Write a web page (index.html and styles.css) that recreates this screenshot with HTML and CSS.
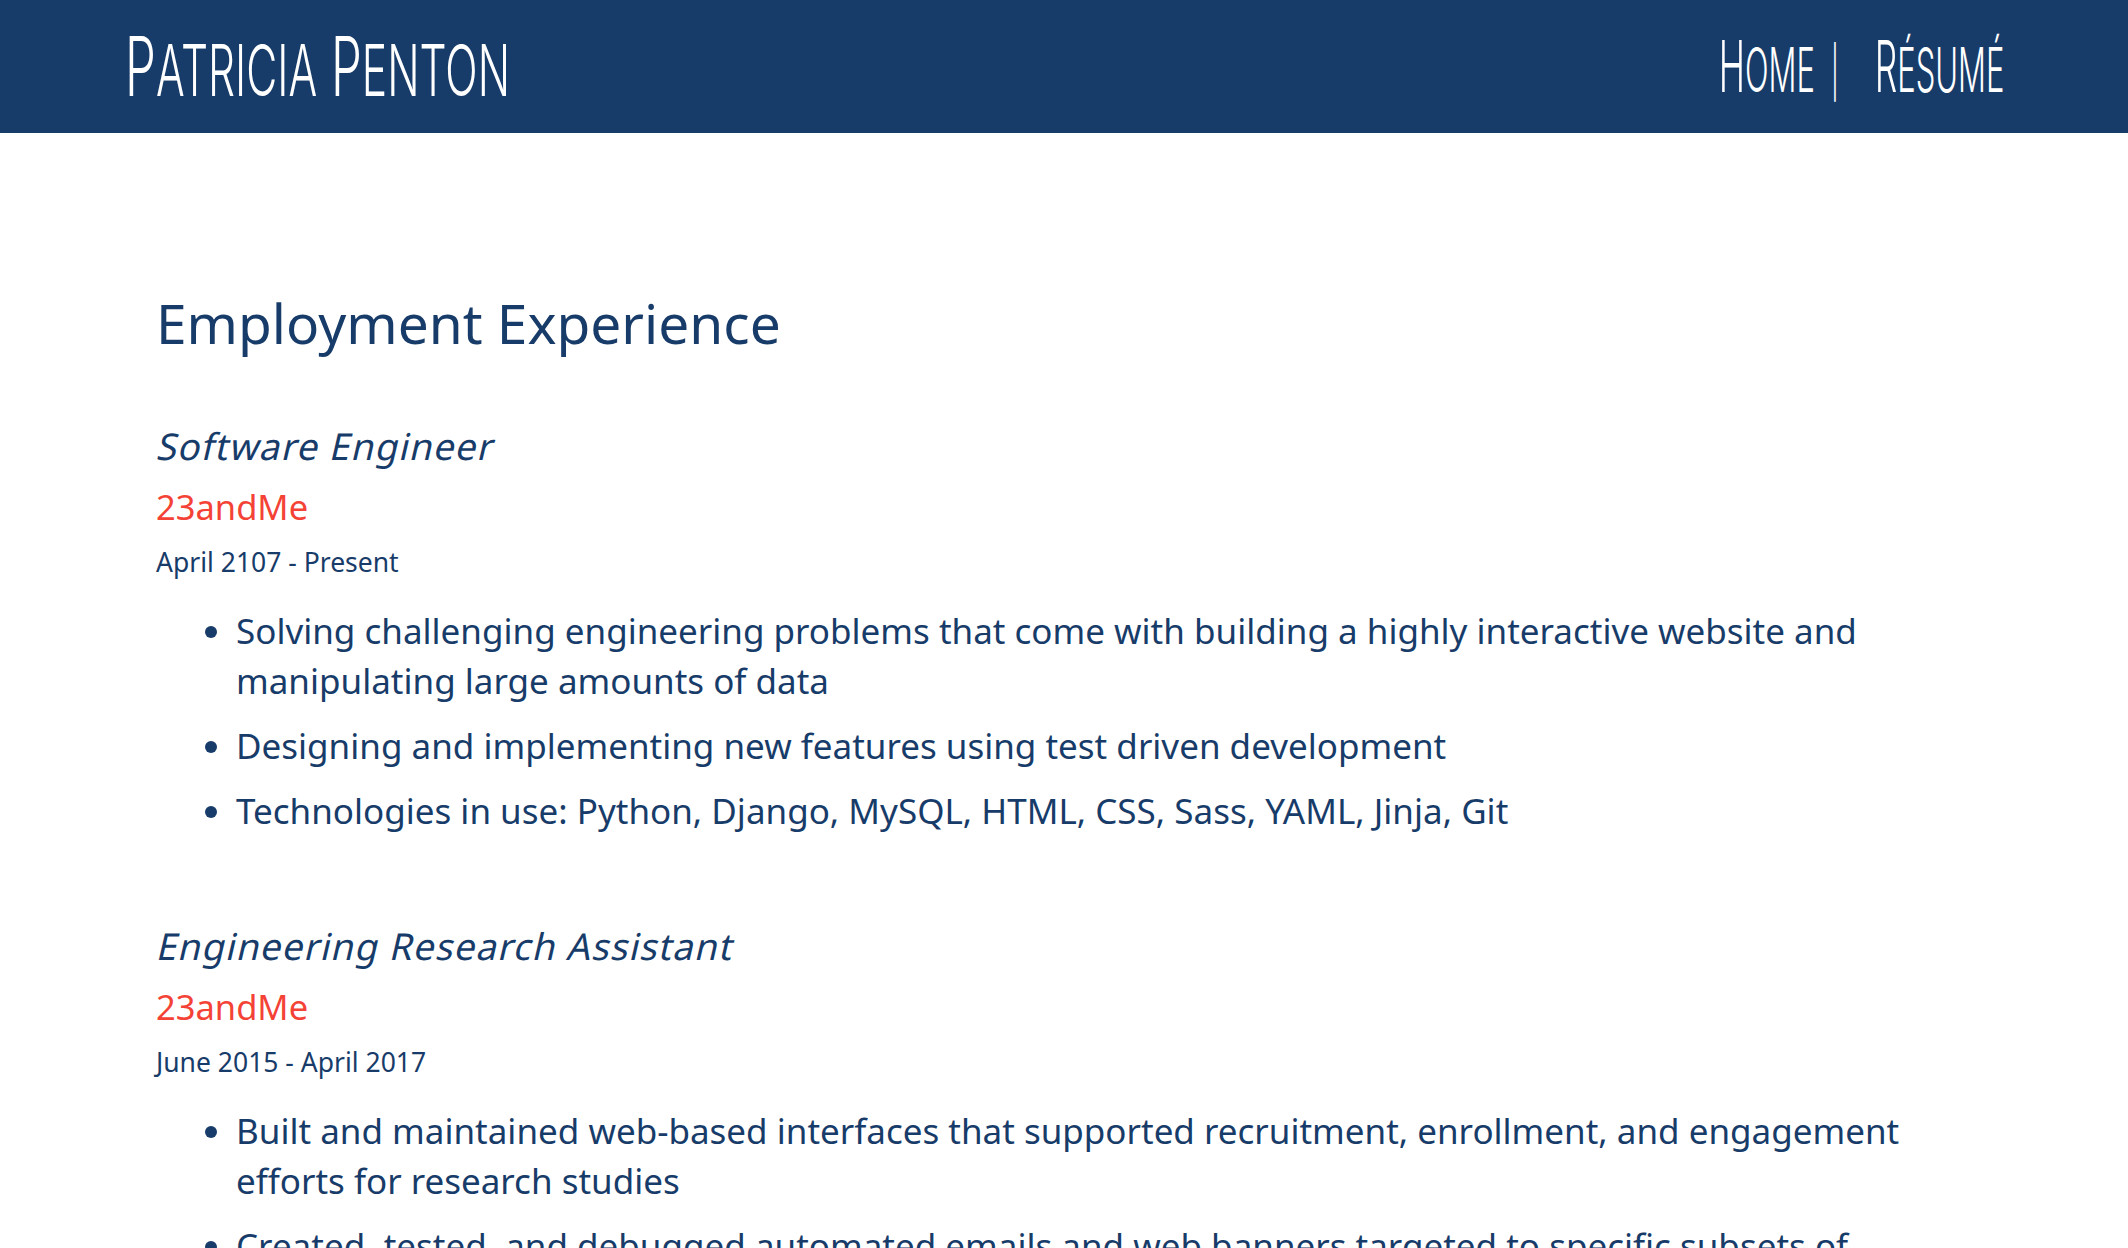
FILE: index.html
```html
<!DOCTYPE html>
<html lang="en">
<head>
<meta charset="utf-8">
<title>Patricia Penton – Résumé</title>
<link rel="stylesheet" href="styles.css">
</head>
<body>
<header class="site-header">
  <a class="brand" href="#"><span class="brand-inner"><span class="big">P</span><span class="small">atricia</span> <span class="big">P</span><span class="small">enton</span></span></a>
  <nav class="nav">
    <span class="nav-inner"><a href="#"><span class="big">H</span><span class="small">ome</span></a><span class="sep">|</span><a href="#"><span class="big">R</span><span class="small">ésumé</span></a></span>
  </nav>
</header>
<main class="content">
  <h1 class="section-title">Employment Experience</h1>

  <section class="job">
    <h2 class="job-title">Software Engineer</h2>
    <p class="company">23andMe</p>
    <p class="dates">April 2107 - Present</p>
    <ul class="duties">
      <li>Solving challenging engineering problems that come with building a highly interactive website and manipulating large amounts of data</li>
      <li>Designing and implementing new features using test driven development</li>
      <li>Technologies in use: Python, Django, MySQL, HTML, CSS, Sass, YAML, Jinja, Git</li>
    </ul>
  </section>

  <section class="job">
    <h2 class="job-title">Engineering Research Assistant</h2>
    <p class="company">23andMe</p>
    <p class="dates">June 2015 - April 2017</p>
    <ul class="duties">
      <li>Built and maintained web-based interfaces that supported recruitment, enrollment, and engagement efforts for research studies</li>
      <li>Created, tested, and debugged automated emails and web banners targeted to specific subsets of participants</li>
      <li>Technologies in use: Python, Django, HTML, CSS, JavaScript, Git</li>
    </ul>
  </section>
</main>
</body>
</html>
```

FILE: styles.css
```css
html, body {
  margin: 0;
  padding: 0;
  background: #ffffff;
}

body {
  font-family: "Noto Sans", "Open Sans", sans-serif;
  color: #183c69;
}

.site-header {
  height: 133px;
  background: #183c69;
  display: flex;
  align-items: center;
  justify-content: space-between;
  padding: 0 124px 0 125px;
  box-sizing: border-box;
  overflow: hidden;
}

.site-header a {
  color: #ffffff;
  text-decoration: none;
}

.brand,
.nav {
  font-family: "Inter", "DejaVu Sans", sans-serif;
  font-weight: 300;
  text-transform: uppercase;
  color: #ffffff;
  white-space: nowrap;
}

.brand {
  font-size: 82px;
  line-height: 1;
  display: block;
}

.brand-inner {
  display: inline-block;
  transform: scaleX(0.6);
  transform-origin: left center;
}

.brand .small {
  font-size: 71px;
}

.nav {
  font-size: 71px;
  line-height: 1;
}

.nav-inner {
  display: inline-block;
  transform: scaleX(0.5);
  transform-origin: right center;
}

.nav .small {
  font-size: 62px;
}

.nav .sep {
  display: inline-block;
  margin: 0 72px 0 32px;
  font-size: 50px;
  vertical-align: 2px;
}

.content {
  padding: 152px 156px 40px 156px;
}

.section-title {
  margin: 0 0 60px;
  font-size: 55px;
  font-weight: 400;
  line-height: normal;
}

.job + .job {
  margin-top: 84px;
}

.job-title {
  margin: 0 0 12px;
  font-size: 37px;
  font-weight: 400;
  font-style: normal;
  letter-spacing: 1.05px;
  line-height: normal;
  transform: skewX(-13deg);
  transform-origin: left 72%;
}

.company {
  margin: 0 0 14px;
  font-size: 34.5px;
  color: #f44336;
  line-height: normal;
}

.dates {
  margin: 0 0 26px;
  font-size: 26.5px;
  line-height: normal;
}

.duties {
  margin: 0;
  padding-left: 80px;
  font-size: 35px;
  line-height: 50px;
}

.duties li + li {
  margin-top: 15px;
}
```
